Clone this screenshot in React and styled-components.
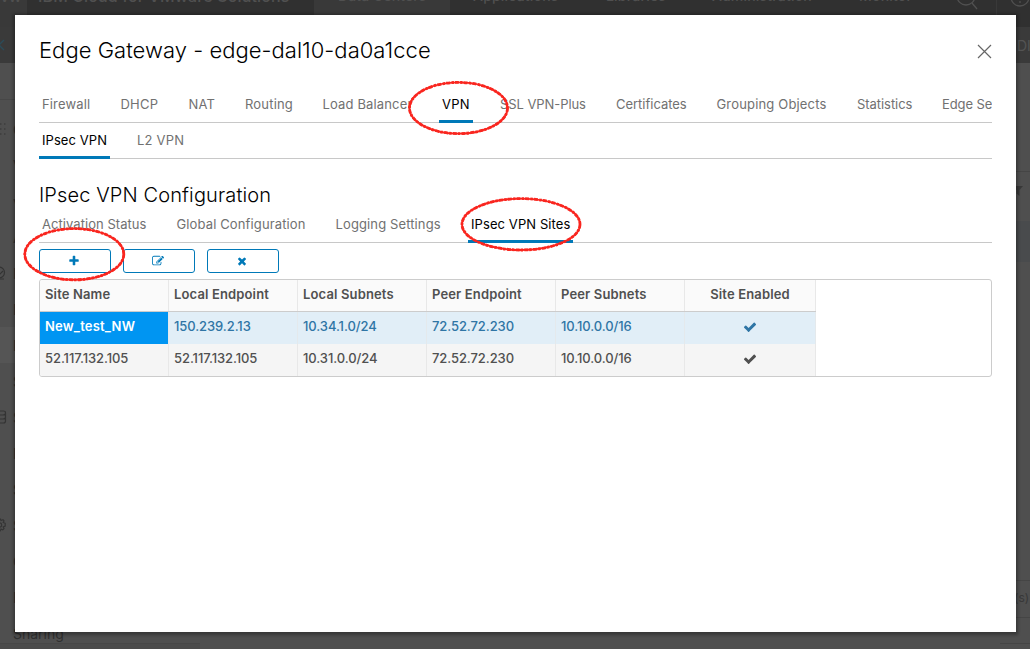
import React from 'react';
import styled, { createGlobalStyle, css } from 'styled-components';

const GlobalStyle = createGlobalStyle`
  * { box-sizing: border-box; }
  html, body { margin: 0; height: 100%; overflow: hidden; }
  body { font-family: Inter, "Liberation Sans", sans-serif; font-size: 13px; color: #565656; }
`;

const Screen = styled.div`
  position: relative;
  width: 1030px;
  height: 649px;
  overflow: hidden;
  background: #4f4f4f;
`;

/* ---------- dimmed page behind the dialog ---------- */

const Page = styled.div`
  display: flex;
  flex-direction: column;
  height: 649px;
  color: #2f2f2f;
`;

const AppHeader = styled.header`
  display: flex;
  align-items: flex-end;
  flex: none;
  height: 27px;
  background: #303030;
`;

const HeaderItem = styled.div`
  flex: none;
  width: ${(p) => p.$width}px;
  height: 27px;
  padding-left: ${(p) => p.$indent || 0}px;
  background: ${(p) => (p.$lit ? '#393939' : 'transparent')};
  color: #505050;
  font-size: ${(p) => p.$size || 14}px;
  font-weight: 500;
  line-height: 20px;
  letter-spacing: ${(p) => p.$spacing ?? 0.2}px;
  white-space: nowrap;
`;

const HeaderLabel = styled.span`
  display: block;
  margin-top: -14px;
`;

const HeaderIcon = styled.svg`
  display: block;
  fill: none;
  stroke: #505050;
  stroke-width: 1.3;
`;

const SubHeader = styled.div`
  display: flex;
  justify-content: space-between;
  align-items: center;
  flex: none;
  height: 36px;
  background: #3a3a3a;
  color: #545454;
  font-size: 14px;
`;

const BackIcon = styled.svg`
  fill: none;
  stroke: #2b4b58;
  stroke-width: 1.4;
`;

const SubHeaderText = styled.span`
  width: 13px;
  white-space: nowrap;
`;

const PageBody = styled.div`
  display: flex;
  justify-content: space-between;
  flex: 1;
  min-height: 0;
`;

const SideMenu = styled.div`
  width: 200px;
  padding-top: 36px;
`;

const SideTop = styled.div`
  height: 12px;
  border-top: 1px solid #474747;
`;

const SideRow = styled.div`
  display: flex;
  align-items: center;
  height: ${(p) => (p.$last ? 28 : 36)}px;
  padding-top: ${(p) => (p.$last ? 9 : 0)}px;
  background: ${(p) => (p.$lit ? '#555' : 'transparent')};
  font-size: 14px;
`;

const SideIcon = styled.span`
  display: flex;
  width: 13px;
  height: 14px;
`;

const SideGlyph = styled.svg`
  display: block;
  fill: none;
  stroke: #343434;
  stroke-width: 1.2;
`;

const SideFooter = styled.div`
  height: 6px;
  background: #4b4b4b;
  border-top: 1px solid #474747;
`;

const RightPane = styled.div`
  display: flex;
  flex-direction: column;
  width: 30px;
  color: #383838;
`;

const PaneSection = styled.div`
  flex: none;
  height: ${(p) => p.$height}px;
  padding: ${(p) => p.$top || 0}px 0 0 14px;
  background: ${(p) => (p.$selected ? '#494b4d' : 'transparent')};
  border-bottom: ${(p) => (p.$plain ? '0' : '1px solid #454545')};
  font-size: 12px;
  line-height: 16px;
`;

const FilterIcon = styled.svg`
  display: block;
  fill: #383838;
`;

/* ---------- dialog ---------- */

const Dialog = styled.section`
  position: absolute;
  left: 15px;
  top: 15px;
  width: 1001px;
  height: 617px;
  padding: 22px 24px 24px;
  background: #fff;
  box-shadow: 0 1px 3px 2px rgba(0, 0, 0, 0.3);
`;

const DialogHeader = styled.div`
  display: flex;
  justify-content: space-between;
  align-items: center;
  height: 28px;
`;

const Title = styled.h1`
  margin: 0;
  padding-bottom: 2px;
  color: #000;
  font-size: 22px;
  font-weight: 300;
  line-height: 26px;
  letter-spacing: 0.03px;
  white-space: nowrap;
`;

const CloseIcon = styled.svg`
  fill: none;
  stroke: #666;
  stroke-width: 1.2;
`;

const TabBar = styled.nav`
  display: flex;
  gap: 24px;
  height: ${(p) => p.$height}px;
  margin-top: ${(p) => p.$top || 0}px;
  overflow: hidden;
  box-shadow: inset 0 -1px 0 #c8c8c8;
`;

const Tab = styled.a`
  flex: none;
  width: ${(p) => p.$width + 6}px;
  padding: 0 3px;
  color: ${(p) => (p.$active ? '#000' : '#717171')};
  line-height: 34px;
  letter-spacing: ${(p) => p.$spacing}px;
  white-space: nowrap;
  ${(p) => p.$active && css`box-shadow: inset 0 -3px 0 #0079b8;`}
`;

const SectionTitle = styled.h2`
  margin: 22px 0 0;
  color: #000;
  font-size: 20px;
  font-weight: 300;
  line-height: 28px;
  letter-spacing: 0.12px;
`;

const Toolbar = styled.div`
  display: flex;
  gap: 12px;
  margin: 6px 0;
`;

const ToolButton = styled.button`
  display: flex;
  align-items: center;
  justify-content: center;
  width: 72px;
  height: 24px;
  padding: 0 2px 0 0;
  background: #fff;
  border: 1px solid #0079b8;
  border-radius: 3px;
`;

const Glyph = styled.svg`
  display: block;
  width: ${(p) => p.$size}px;
  height: ${(p) => p.$size}px;
  fill: ${(p) => p.$color};
`;

const Grid = styled.div`
  width: 953px;
  height: 98px;
  border: 1px solid #ccc;
  border-radius: 3px;
  overflow: hidden;
`;

const GridRow = styled.div`
  display: grid;
  grid-template-columns: repeat(5, 129px) 131px;
  width: 776px;
  height: 32px;
  background: ${(p) => (p.$header ? '#fafafa' : p.$selected ? '#e1eef7' : '#f5f5f5')};
  border-bottom: ${(p) => (p.$header ? '1px solid #ccc' : '0')};
  color: ${(p) => (p.$selected ? '#2f75a5' : '#505050')};
  font-weight: ${(p) => (p.$header ? 600 : 450)};
`;

const Cell = styled.div`
  display: flex;
  align-items: center;
  justify-content: ${(p) => (p.$center ? 'center' : 'flex-start')};
  padding: 0 0 ${(p) => (p.$mark ? 2 : 4)}px ${(p) => (p.$center ? 0 : 5)}px;
  border-right: 1px solid ${(p) => (p.$onBlue ? '#e4e9ec' : '#e8e8e8')};
  letter-spacing: ${(p) => p.$spacing || 0}px;
  white-space: nowrap;
  ${(p) => p.$picked && css`
    background: #0095f2;
    color: #fff;
    font-weight: 600;
  `}
`;

const Markup = styled.svg`
  position: absolute;
  left: 0;
  top: 0;
  pointer-events: none;
  fill: none;
  stroke: #f9261f;
`;

const ICONS = {
  plus: 'M1600 736v192q0 40-28 68t-68 28h-416v416q0 40-28 68t-68 28h-192q-40 0-68-28t-28-68v-416h-416q-40 0-68-28t-28-68v-192q0-40 28-68t68-28h416v-416q0-40 28-68t68-28h192q40 0 68 28t28 68v416h416q40 0 68 28t28 68z',
  edit: 'M888 1184l116-116-152-152-116 116v56h96v96h56zm440-720q-16-16-33 1l-350 350q-17 17-1 33t33-1l350-350q17-17 1-33zm80 594v190q0 119-84.5 203.5t-203.5 84.5h-832q-119 0-203.5-84.5t-84.5-203.5v-832q0-119 84.5-203.5t203.5-84.5h832q63 0 117 25 15 7 18 23 3 17-9 29l-49 49q-14 14-32 8-23-6-45-6h-832q-66 0-113 47t-47 113v832q0 66 47 113t113 47h832q66 0 113-47t47-113v-126q0-13 9-22l64-64q15-15 35-7t20 29zm-96-738l288 288-672 672h-288v-288zm444 132l-92 92-288-288 92-92q28-28 68-28t68 28l152 152q28 28 28 68t-28 68z',
  remove: 'M1490 1322q0 40-28 68l-136 136q-28 28-68 28t-68-28l-294-294-294 294q-28 28-68 28t-68-28l-136-136q-28-28-28-68t28-68l294-294-294-294q-28-28-28-68t28-68l136-136q28-28 68-28t68 28l294 294 294-294q28-28 68-28t68 28l136 136q28 28 28 68t-28 68l-294 294 294 294q28 28 28 68z',
  check: 'M1671 566q0 40-28 68l-724 724-136 136q-28 28-68 28t-68-28l-136-136-362-362q-28-28-28-68t28-68l136-136q28-28 68-28t68 28l294 295 656-657q28-28 68-28t68 28l136 136q28 28 28 68z',
};

function Icon({ name, size = 12, color = '#0079b8' }) {
  return (
    <Glyph viewBox="0 0 1792 1792" $size={size} $color={color}>
      <path d={ICONS[name]} />
    </Glyph>
  );
}

/* label, text width, letter spacing */
const MAIN_TABS = [
  ['Firewall', 48.5, 0.15],
  ['DHCP', 38, 0.2],
  ['NAT', 26.5, 0.15],
  ['Routing', 47.5, 0.18],
  ['Load Balancer', 89.5, 0.15],
  ['VPN', 28, 0.2],
  ['SSL VPN-Plus', 86, -0.07],
  ['Certificates', 70.5, -0.02],
  ['Grouping Objects', 110.5, 0.17],
  ['Statistics', 55, -0.05],
  ['Edge Settings', 84, -0.08],
];
const VPN_TABS = [
  ['IPsec VPN', 65, 0.07],
  ['L2 VPN', 47, 0.2],
];
const IPSEC_TABS = [
  ['Activation Status', 104.5, 0.05],
  ['Global Configuration', 129, 0.13],
  ['Logging Settings', 105.5, 0.12],
  ['IPsec VPN Sites', 99, 0.09],
];

const COLUMNS = ['Site Name', 'Local Endpoint', 'Local Subnets', 'Peer Endpoint', 'Peer Subnets', 'Site Enabled'];
const SITES = [
  ['New_test_NW', '150.239.2.13', '10.34.1.0/24', '72.52.72.230', '10.10.0.0/16'],
  ['52.117.132.105', '52.117.132.105', '10.31.0.0/24', '72.52.72.230', '10.10.0.0/16'],
];

const RINGS = [
  { cx: 458.5, cy: 108, rx: 49, ry: 25.6 },
  { cx: 521, cy: 224.3, rx: 59, ry: 25.7 },
  { cx: 74.3, cy: 254.2, rx: 49.5, ry: 25.6 },
];

function Tabs({ items, active, height, top }) {
  return (
    <TabBar $height={height} $top={top}>
      {items.map(([label, width, spacing]) => (
        <Tab key={label} $width={width} $spacing={spacing} $active={label === active}>
          {label}
        </Tab>
      ))}
    </TabBar>
  );
}

const Dots = () => (
  <SideGlyph width="13" height="14" viewBox="0 0 13 14">
    <path d="M0 2h1.500M4 2h1.500M0 7h1.500M4 7h1.500M0 12h1.500M4 12h1.500" />
  </SideGlyph>
);
const Shield = () => (
  <SideGlyph width="13" height="14" viewBox="0 0 13 14">
    <circle cx="-1" cy="6.500" r="5.500" />
    <path d="M-2 10l5-5M0 13h4" />
  </SideGlyph>
);
const Disks = () => (
  <SideGlyph width="13" height="14" viewBox="0 0 13 14">
    <path d="M-4 1h7.500q2 0 2 2v8q0 2-2 2h-7.500M-4 5h7q2 0 2.500-1.500M-4 9h7q2 0 2.500-1.500" />
  </SideGlyph>
);
const Gear = () => (
  <SideGlyph width="13" height="14" viewBox="0 0 13 14">
    <circle cx="-.5" cy="7" r="2.200" />
    <path d="M-1 1h1.500l.5 1.500 2-.8 1 1.200-.8 1.600 2 .8v2.800l-2 .8.8 1.800-1.200 1.200-1.800-.8-.8 1.900H-1" />
  </SideGlyph>
);

const MENU = [
  { icon: <Dots />, text: 'G' },
  { text: 'V' },
  { text: 'v' },
  { text: 'A' },
  { icon: <Shield />, text: 'F' },
  { text: 'N' },
  { text: 'I', lit: true },
  { text: 'S' },
  { icon: <Disks />, text: 'S' },
  { text: 'F' },
  { text: 'S' },
  { icon: <Gear />, text: 'S' },
  { text: 'C' },
  { text: 'M' },
  { text: 'Sharing', last: true },
];

function Backdrop() {
  return (
    <Page>
      <AppHeader>
        <HeaderItem $width={27} $lit $size={16} $spacing={-0.6}><HeaderLabel>vw</HeaderLabel></HeaderItem>
        <HeaderItem $width={287} $indent={11} $size={16} $spacing={0.13}>
          <HeaderLabel>IBM Cloud for VMware Solutions</HeaderLabel>
        </HeaderItem>
        <HeaderItem $width={136} $indent={24} $lit $spacing={0.1}><HeaderLabel>Data Centers</HeaderLabel></HeaderItem>
        <HeaderItem $width={132} $indent={23}><HeaderLabel>Applications</HeaderLabel></HeaderItem>
        <HeaderItem $width={106} $indent={24}><HeaderLabel>Libraries</HeaderLabel></HeaderItem>
        <HeaderItem $width={148} $indent={24}><HeaderLabel>Administration</HeaderLabel></HeaderItem>
        <HeaderItem $width={119} $indent={23}><HeaderLabel>Monitor</HeaderLabel></HeaderItem>
        <HeaderItem $width={75}>
          <HeaderIcon width="75" height="27" viewBox="0 0 75 27">
            <circle cx="11" cy="-4" r="9" />
            <path d="M17 3l5 6" />
            <path d="M41.500 0v27" stroke="#393939" />
            <circle cx="65" cy="-3" r="9" />
            <path d="M65 1v2" />
          </HeaderIcon>
        </HeaderItem>
      </AppHeader>
      <SubHeader>
        <BackIcon width="8" height="16" viewBox="0 0 8 16">
          <path d="M4 3L-1 8l5 5" />
        </BackIcon>
        <SubHeaderText>DI</SubHeaderText>
      </SubHeader>
      <PageBody>
        <SideMenu>
          <SideTop />
          {MENU.map((row, i) => (
            <SideRow key={i} $lit={row.lit} $last={row.last}>
              <SideIcon>{row.icon}</SideIcon>
              {row.text}
            </SideRow>
          ))}
          <SideFooter />
        </SideMenu>
        <RightPane>
          <PaneSection $height={109} />
          <PaneSection $height={49} $top={14} $plain>
            <FilterIcon width="10" height="10" viewBox="0 0 10 10"><path d="M-1 0h10L5.500 4v6L2.500 7.500V4z" /></FilterIcon>
          </PaneSection>
          <PaneSection $height={41} $selected $plain />
          <PaneSection $height={319} />
          <PaneSection $height={37} $top={9}>(s)</PaneSection>
          <PaneSection $height={26} />
        </RightPane>
      </PageBody>
    </Page>
  );
}

export default function App() {
  return (
    <Screen>
      <GlobalStyle />
      <Backdrop />
      <Dialog>
        <DialogHeader>
          <Title>Edge Gateway - edge-dal10-da0a1cce</Title>
          <CloseIcon width="15" height="15" viewBox="0 0 15 15">
            <path d="M1 1l13 13M14 1L1 14" />
          </CloseIcon>
        </DialogHeader>
        <Tabs items={MAIN_TABS} active="VPN" height={36} top={22} />
        <Tabs items={VPN_TABS} active="IPsec VPN" height={36} />
        <SectionTitle>IPsec VPN Configuration</SectionTitle>
        <Tabs items={IPSEC_TABS} active="IPsec VPN Sites" height={36} top={-2} />
        <Toolbar>
          <ToolButton aria-label="Add"><Icon name="plus" /></ToolButton>
          <ToolButton aria-label="Edit"><Icon name="edit" /></ToolButton>
          <ToolButton aria-label="Delete"><Icon name="remove" /></ToolButton>
        </Toolbar>
        <Grid>
          <GridRow $header>
            {COLUMNS.map((name, i) => (
              <Cell key={name} $center={i === 5} $spacing={0.14}>{name}</Cell>
            ))}
          </GridRow>
          {SITES.map((site, r) => (
            <GridRow key={site[0]} $selected={r === 0}>
              {site.map((value, c) => (
                <Cell key={c} $onBlue={r === 0} $picked={r === 0 && c === 0} $spacing={r === 0 && c === 0 ? 0.2 : -0.08}>
                  {value}
                </Cell>
              ))}
              <Cell $center $mark $onBlue={r === 0}>
                <Icon name="check" size={14} color={r === 0 ? '#2f75a5' : '#505050'} />
              </Cell>
            </GridRow>
          ))}
        </Grid>
      </Dialog>
      <Markup width="1030" height="649" viewBox="0 0 1030 649">
        {RINGS.map((ring) => (
          <g key={ring.cx}>
            <ellipse {...ring} strokeWidth="1.9" />
            <ellipse {...ring} strokeWidth="2.800" strokeDasharray="4 1.3 2.5 1" />
          </g>
        ))}
      </Markup>
    </Screen>
  );
}
